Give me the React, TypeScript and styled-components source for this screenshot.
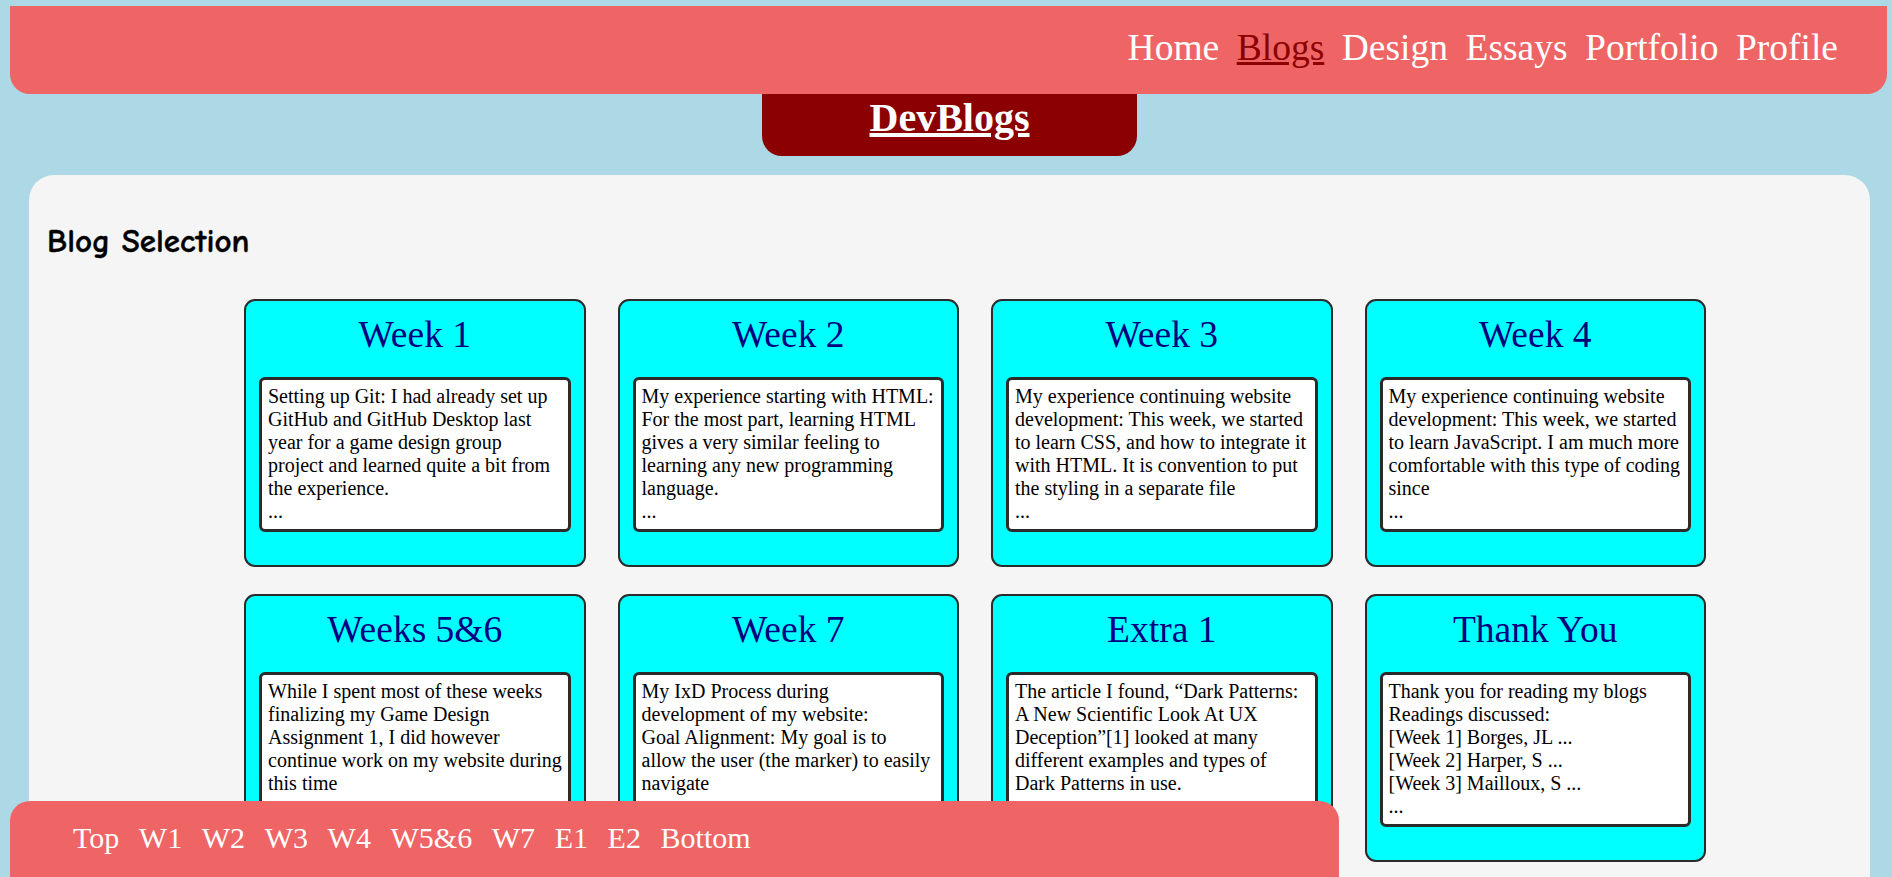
import React from "react";
import styled, { createGlobalStyle } from "styled-components";

const GlobalStyle = createGlobalStyle`
  html, body {
    margin: 0;
    padding: 0;
  }
  body {
    background: #add8e6;
    font-family: "Liberation Serif", "Times New Roman", serif;
    overflow: hidden;
  }
`;

const Page = styled.div`
  display: flex;
  flex-direction: column;
  min-height: 100vh;
`;

const Header = styled.header`
  box-sizing: border-box;
  height: 88px;
  margin: 6px 5px 0 10px;
  padding: 20px 49px 0 0;
  background: #ef6565;
  border-radius: 0 0 20px 20px;
  display: flex;
  justify-content: flex-end;
  align-items: flex-start;
`;

const Nav = styled.nav`
  display: flex;
  gap: 17.5px;
`;

const NavLink = styled.a<{ $active?: boolean }>`
  font-size: 37.5px;
  line-height: normal;
  color: ${(p) => (p.$active ? "#8b0000" : "#ffffff")};
  text-decoration: ${(p) => (p.$active ? "underline" : "none")};
  cursor: pointer;
`;

const TitleTab = styled.div`
  box-sizing: border-box;
  width: 375px;
  height: 62px;
  margin-left: calc(50% - 184px);
  background: #8b0000;
  border-radius: 0 0 20px 20px;
  display: flex;
  justify-content: center;
  align-items: flex-start;
`;

const PageTitle = styled.h1`
  margin: 0;
  font-size: 40px;
  font-weight: bold;
  line-height: normal;
  color: #ffffff;
  text-decoration: underline;
`;

const Panel = styled.main`
  box-sizing: border-box;
  margin: 19px 22px 0 29px;
  padding: 44px 18px 160px;
  background: #f5f5f5;
  border-radius: 25px;
  flex: 1;
`;

const SectionHeading = styled.h2`
  margin: 0 0 36px;
  font-family: "Comic Sans MS", "Comic Neue", "Noto Sans", sans-serif;
  font-weight: 800;
  font-size: 33px;
  line-height: 44px;
  color: #000000;
  -webkit-text-stroke: 0.4px #000000;
`;

const CardGrid = styled.div`
  display: grid;
  grid-template-columns: repeat(4, 341.5px);
  column-gap: 32px;
  row-gap: 27px;
  margin-left: 197px;
`;

const Card = styled.article`
  box-sizing: border-box;
  height: 268px;
  padding: 12px 13px 33px;
  background: #00ffff;
  border: 2px solid #2b2b2b;
  border-radius: 11px;
  display: flex;
  flex-direction: column;
`;

const CardTitle = styled.h3`
  margin: 0 0 21px;
  font-size: 37.5px;
  font-weight: normal;
  line-height: normal;
  color: #000080;
  text-align: center;
`;

const Excerpt = styled.div`
  box-sizing: border-box;
  height: 155px;
  padding: 5px 6px;
  background: #ffffff;
  border: 3px solid #2b2b2b;
  border-radius: 6px;
  font-size: 20px;
  line-height: 23px;
  color: #000000;
  white-space: nowrap;
  overflow: hidden;
`;

const Footer = styled.footer`
  position: fixed;
  left: 10px;
  bottom: 0;
  box-sizing: border-box;
  width: 1329px;
  height: 76px;
  padding: 20px 0 0 63px;
  background: #ef6565;
  border-radius: 20px 20px 0 0;
  display: flex;
  align-items: flex-start;
  gap: 19.6px;
`;

const JumpLink = styled.a`
  font-size: 30px;
  line-height: normal;
  color: #ffffff;
  text-decoration: none;
  cursor: pointer;
`;

const navItems = ["Home", "Blogs", "Design", "Essays", "Portfolio", "Profile"];

const blogs: { title: string; lines: string[] }[] = [
  {
    title: "Week 1",
    lines: [
      "Setting up Git: I had already set up",
      "GitHub and GitHub Desktop last",
      "year for a game design group",
      "project and learned quite a bit from",
      "the experience.",
      "...",
    ],
  },
  {
    title: "Week 2",
    lines: [
      "My experience starting with HTML:",
      "For the most part, learning HTML",
      "gives a very similar feeling to",
      "learning any new programming",
      "language.",
      "...",
    ],
  },
  {
    title: "Week 3",
    lines: [
      "My experience continuing website",
      "development: This week, we started",
      "to learn CSS, and how to integrate it",
      "with HTML. It is convention to put",
      "the styling in a separate file",
      "...",
    ],
  },
  {
    title: "Week 4",
    lines: [
      "My experience continuing website",
      "development: This week, we started",
      "to learn JavaScript. I am much more",
      "comfortable with this type of coding",
      "since",
      "...",
    ],
  },
  {
    title: "Weeks 5&6",
    lines: [
      "While I spent most of these weeks",
      "finalizing my Game Design",
      "Assignment 1, I did however",
      "continue work on my website during",
      "this time",
      "...",
    ],
  },
  {
    title: "Week 7",
    lines: [
      "My IxD Process during",
      "development of my website:",
      "Goal Alignment: My goal is to",
      "allow the user (the marker) to easily",
      "navigate",
      "...",
    ],
  },
  {
    title: "Extra 1",
    lines: [
      "The article I found, \u201CDark Patterns:",
      "A New Scientific Look At UX",
      "Deception\u201D[1] looked at many",
      "different examples and types of",
      "Dark Patterns in use.",
      "...",
    ],
  },
  {
    title: "Thank You",
    lines: [
      "Thank you for reading my blogs",
      "Readings discussed:",
      "[Week 1] Borges, JL ...",
      "[Week 2] Harper, S ...",
      "[Week 3] Mailloux, S ...",
      "...",
    ],
  },
];

const jumpLinks = ["Top", "W1", "W2", "W3", "W4", "W5&6", "W7", "E1", "E2", "Bottom"];

export default function App() {
  return (
    <>
      <GlobalStyle />
      <Page>
        <Header>
          <Nav>
            {navItems.map((item) => (
              <NavLink key={item} $active={item === "Blogs"}>
                {item}
              </NavLink>
            ))}
          </Nav>
        </Header>
        <TitleTab>
          <PageTitle>DevBlogs</PageTitle>
        </TitleTab>
        <Panel>
          <SectionHeading>Blog Selection</SectionHeading>
          <CardGrid>
            {blogs.map((b) => (
              <Card key={b.title}>
                <CardTitle>{b.title}</CardTitle>
                <Excerpt>
                  {b.lines.map((l, i) => (
                    <React.Fragment key={i}>
                      {l}
                      {i < b.lines.length - 1 && <br />}
                    </React.Fragment>
                  ))}
                </Excerpt>
              </Card>
            ))}
          </CardGrid>
        </Panel>
        <Footer>
          {jumpLinks.map((j) => (
            <JumpLink key={j}>{j}</JumpLink>
          ))}
        </Footer>
      </Page>
    </>
  );
}
